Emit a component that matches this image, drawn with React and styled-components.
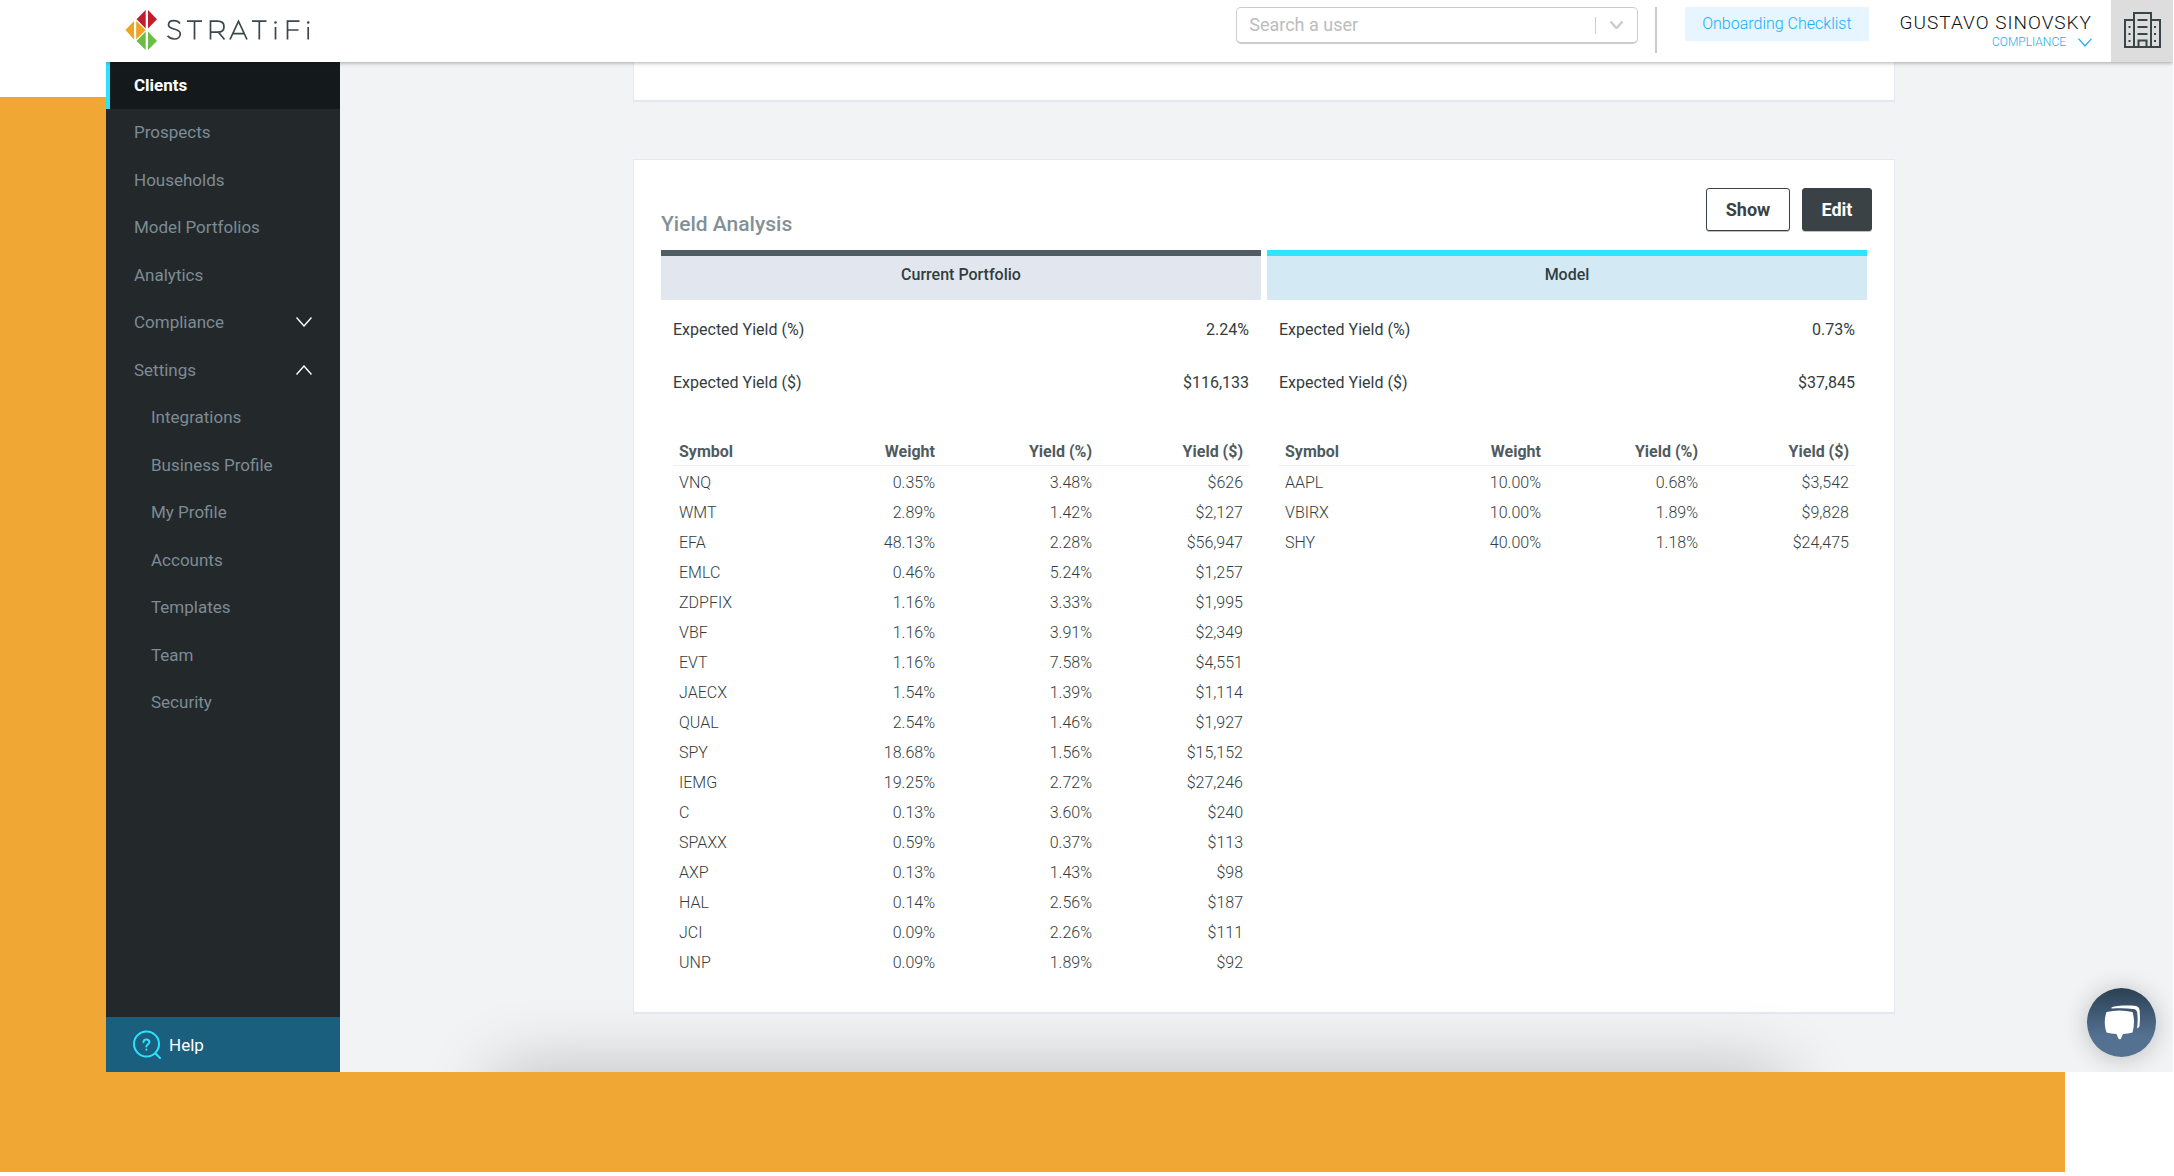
import React, { useState } from "react";
import styled, { createGlobalStyle, css } from "styled-components";

const GlobalStyle = createGlobalStyle`
  *, *::before, *::after { box-sizing: border-box; }
  body {
    margin: 0;
    background: #fff;
    color: #333d40;
    font-family: Roboto, "Liberation Sans", sans-serif;
    font-size: 16px;
    font-weight: 300;
  }
  button, input { font: inherit; }
`;

const Page = styled.div`
  display: flex;
  min-height: 100vh;
  padding-bottom: 4px;
`;

const Stage = styled.div`
  flex: 1;
  display: flex;
  padding: 0 1px 100px 106px;
  background: linear-gradient(#f0a733, #f0a733) no-repeat 0 97px / calc(100% - 109px) calc(100% - 97px);
`;

const Window = styled.div`
  position: relative;
  flex: 1;
  display: flex;
  flex-direction: column;
  overflow: hidden;

  &::after {
    content: "";
    position: absolute;
    top: 100%;
    left: 390px;
    right: 390px;
    height: 100px;
    box-shadow: 0 0 72px rgba(0, 0, 0, 0.24);
    pointer-events: none;
  }
`;

const Header = styled.header`
  z-index: 1;
  display: flex;
  align-items: flex-start;
  height: 62px;
  background: #fff;
  box-shadow: 0 1px 4px rgba(0, 0, 0, 0.32);
`;

const LogoLink = styled.a`
  display: block;
  margin: 9px auto 0 19px;
`;

const SearchBox = styled.div`
  display: flex;
  align-items: center;
  width: 402px;
  height: 37px;
  margin-top: 7px;
  border: 1px solid #ccc;
  border-bottom-width: 2px;
  border-radius: 5px;
`;

const SearchInput = styled.input`
  flex: 1;
  min-width: 0;
  padding: 0 12px;
  border: 0;
  outline: 0;
  background: none;
  font-size: 18px;
  font-weight: 400;
  line-height: 24px;

  &::placeholder { color: #bcbcbc; opacity: 1; }
`;

const DropButton = styled.button`
  display: grid;
  place-items: center;
  width: 42px;
  height: 17px;
  padding: 0;
  border: 0;
  border-left: 1px solid #ccc;
  background: none;
`;

const Divider = styled.span`
  width: 2px;
  height: 46px;
  margin: 7px 28px 0 17px;
  background: #ccc;
`;

const Checklist = styled.a`
  padding: 5px 17px;
  margin-top: 7px;
  background: #e6f5ff;
  color: #1badf5;
  line-height: 24px;
  text-decoration: none;
`;

const Account = styled.button`
  display: flex;
  flex-direction: column;
  align-items: flex-end;
  margin: 11px 19px 0 31px;
  padding: 0;
  border: 0;
  background: none;
`;

const AccountName = styled.span`
  color: #111;
  font-size: 19px;
  line-height: 24px;
  letter-spacing: 1px;
`;

const AccountRole = styled.span`
  display: flex;
  align-items: center;
  gap: 12px;
  color: #1badf5;
  font-size: 12px;
  line-height: 14px;
`;

const OrgButton = styled.button`
  display: grid;
  place-items: center;
  width: 62px;
  height: 62px;
  padding: 0;
  border: 0;
  background: #ddd;
`;

const Body = styled.div`
  flex: 1;
  display: flex;
`;

const Sidebar = styled.aside`
  display: flex;
  flex-direction: column;
  justify-content: space-between;
  width: 234px;
  background: #23292b;
`;

const NavList = styled.ul`
  margin: 0;
  padding: 0;
  list-style: none;
`;

const NavItem = styled.li`
  height: 47px;
  &:nth-child(even) { height: 48px; }
`;

const NavLink = styled.a`
  display: flex;
  align-items: center;
  justify-content: space-between;
  height: 100%;
  padding: 0 28px 2px ${(p) => (p.$nested ? 41 : 24)}px;
  border-left: 4px solid transparent;
  color: #7d8b94;
  font-size: 17px;
  font-weight: 400;
  line-height: 24px;
  text-decoration: none;

  ${(p) =>
    p.$active &&
    css`
      border-left-color: #2ae4ff;
      background: #141a1c;
      color: #fff;
      font-weight: 700;
    `}
`;

const HelpLink = styled.a`
  display: flex;
  align-items: center;
  gap: 8px;
  height: 55px;
  padding-left: 27px;
  background: #1a5f7d;
  color: #fff;
  font-size: 17px;
  font-weight: 400;
  line-height: 24px;
  text-decoration: none;
`;

const Main = styled.main`
  flex: 1;
  display: flex;
  flex-direction: column;
  align-items: center;
  gap: 57px;
  padding: 0 0 58px 15px;
  background: #f1f3f5;
`;

const Card = styled.section`
  width: 100%;
  max-width: 1262px;
  border: 1px solid #e5e8ee;
  border-bottom-width: 2px;
  background: #fff;
`;

const PreviousCard = styled(Card)`
  height: 40px;
  border-top: 0;
`;

const YieldCard = styled(Card)`
  flex: 1;
  padding: 28px 27px 24px;
`;

const CardHeader = styled.div`
  display: flex;
  justify-content: space-between;
  margin-bottom: 12px;
`;

const CardTitle = styled.h2`
  align-self: flex-end;
  margin: 0;
  color: #848f96;
  font-size: 21px;
  font-weight: 500;
  line-height: 28px;
`;

const Actions = styled.div`
  display: flex;
  gap: 12px;
  margin: 0 -5px 7px 0;
`;

const ActionButton = styled.button`
  width: ${(p) => (p.$filled ? 70 : 84)}px;
  height: 43px;
  padding: 0;
  border: 1px solid #3a4245;
  border-radius: 3px;
  background: ${(p) => (p.$filled ? "#3a4245" : "#fff")};
  color: ${(p) => (p.$filled ? "#fff" : "#3a4245")};
  font-size: 18px;
  font-weight: 700;
  box-shadow: 0 1px 0 rgba(0, 0, 0, 0.25);
`;

const Columns = styled.div`
  display: grid;
  grid-template-columns: 1fr 1fr;
  gap: 6px;
`;

const ColumnTitle = styled.h3`
  height: 50px;
  margin: 0;
  padding-top: 7px;
  border-top: 6px solid ${(p) => p.$accent};
  background: ${(p) => p.$tint};
  font-size: 16px;
  font-weight: 500;
  line-height: 24px;
  text-align: center;
`;

const Summary = styled.dl`
  margin: 3px 0 28px;
  padding: 0 12px;
`;

const SummaryRow = styled.div`
  display: flex;
  justify-content: space-between;
  font-weight: 400;
  line-height: 53px;
`;

const SummaryValue = styled.dd`
  margin: 0;
`;

const Holdings = styled.table`
  width: calc(100% - 24px);
  margin: 0 12px;
  border-collapse: collapse;
  table-layout: fixed;
`;

const Column = styled.col`
  width: ${(p) => (p.$width ? `${p.$width}px` : "auto")};
`;

const HeadCell = styled.th`
  height: 28px;
  padding: 2px 6px 0;
  border-bottom: 1px solid #eceef1;
  color: #4f5b60;
  font-weight: 700;
  text-align: ${(p) => (p.$start ? "left" : "right")};
`;

const Cell = styled.td`
  height: 30px;
  padding: 5px 6px 1px;
  line-height: 24px;
  text-align: ${(p) => (p.$start ? "left" : "right")};
`;

const ChatButton = styled.button`
  position: absolute;
  right: 17px;
  bottom: 15px;
  z-index: 2;
  display: grid;
  place-items: center;
  width: 69px;
  height: 69px;
  padding: 0;
  border: 0;
  border-radius: 50%;
  background: linear-gradient(#2b4053, #547192 70%);
  box-shadow: 0 2px 24px rgba(0, 0, 0, 0.22);
`;

function Logo() {
  return (
    <svg width="190" height="42" viewBox="0 0 190 42" role="img" aria-label="StratiFi">
      <g fill="#bf1e2e"><path d="M20.700 1v18.500L11.500 10.200z" /><path d="M23 1v18.500L32 10.200z" /></g>
      <g fill="#f0a31f"><path d="M9 12v18.500L0.500 21z" /><path d="M11.200 12v18.500L20.500 21z" /></g>
      <g fill="#6cbd45"><path d="M20.700 22.500V41L11.500 32z" /><path d="M23 22.500V41L32 32z" /></g>
      <g fill="none" stroke="#3a474b" strokeWidth="1.700">
        <path d="M55 14.500C53.500 12.500 51.500 11.700 48.900 11.700C45.500 11.700 43.500 13.500 43.500 16C43.500 21.500 55.300 18.500 55.300 25C55.300 28 52.700 30 49.500 30C46.500 30 44.300 29 42.500 26.800" />
        <path d="M62 12.200h15M69.500 12.200V30.500" />
        <path d="M85.500 30.500V12.200h7c4.500 0 6.500 2.300 6.500 5.500s-2 5.500-6.500 5.500h-7M93.500 23.200l6 7.300" />
        <path d="M105 30.500l8.500-18.300L122 30.500M108 24.700h11" />
        <path d="M127 12.200h14.500M134.300 12.200V30.500" />
        <path d="M150.500 18v12.500M162.500 30.500V12.200h12M162.500 21h11M183.200 18v12.500" />
      </g>
      <g fill="#3a474b"><circle cx="150.500" cy="13.500" r="1.300" /><circle cx="183.200" cy="13.500" r="1.300" /></g>
    </svg>
  );
}

function Chevron({ up, width = 16, height = 10, stroke = "#fff", weight = 1.4 }) {
  return (
    <svg width={width} height={height} viewBox="0 0 16 10" fill="none" stroke={stroke} strokeWidth={weight} aria-hidden="true">
      <path d={up ? "M0.500 9.500L8 1l7.500 8.500" : "M0.500 0.500L8 9l7.500-8.500"} />
    </svg>
  );
}

function BuildingIcon() {
  return (
    <svg width="38" height="38" viewBox="0 0 38 38" fill="none" stroke="#3a4547" strokeWidth="2" aria-hidden="true">
      <path d="M11 35V1h17v34M11 8H2v27h35V8h-9M15.500 35v-6.500h8V35" />
      <path d="M14.500 8h10M14.500 15h10M14.500 22h10" />
      <path d="M5.500 15h2M5.500 22h2M5.500 29h2M31 15h2M31 22h2M31 29h2" />
    </svg>
  );
}

function HelpIcon() {
  return (
    <svg width="28" height="29" viewBox="0 0 28 29" fill="none" stroke="#2ae4ff" strokeWidth="2" strokeLinecap="round" aria-hidden="true">
      <circle cx="13.500" cy="14" r="12.500" />
      <path d="M22.500 23.500l4.500 4.500" />
      <path d="M10.500 12.300c0-1.800 1.300-2.800 2.900-2.800s3 1 3 2.700c0 2-3 2.200-3 4.300" />
      <path d="M13.400 19.500v0.200" />
    </svg>
  );
}

function ChatIcon() {
  return (
    <svg width="36" height="35" viewBox="0 0 36 35" fill="#fff" aria-hidden="true">
      <path d="M2.500 7C11 5 20 5 28.500 7c2 6 2 13.500 0 20.500-3 .9-6 1.300-9.500 1.500L17 33.500q-1.300 1.700-2.600 0L12.500 29C9 28.800 5.500 28.300 2.500 27.500 .2 20.500 .2 13.500 2.500 7z" />
      <path d="M7.500 2.500C12 .3 25 .3 32 1c2.500.5 3.500 2.500 3.700 5 .3 5 .3 10-.2 15-.3 1.300-1.300 2-2.500 2.500.8-5.500.9-11 .2-16-.5-2.300-1.700-3.200-4-3.500-7-1-14-1-20.500-.5-1.300 0-1.700-.4-1.200-1z" />
    </svg>
  );
}

const NAV = [
  { label: "Clients", active: true },
  { label: "Prospects" },
  { label: "Households" },
  { label: "Model Portfolios" },
  { label: "Analytics" },
  { label: "Compliance", arrow: "down" },
  { label: "Settings", arrow: "up" },
  { label: "Integrations", nested: true },
  { label: "Business Profile", nested: true },
  { label: "My Profile", nested: true },
  { label: "Accounts", nested: true },
  { label: "Templates", nested: true },
  { label: "Team", nested: true },
  { label: "Security", nested: true },
];

const PORTFOLIOS = [
  {
    title: "Current Portfolio",
    accent: "#505e64",
    tint: "#e2e7ef",
    percent: "2.24%",
    dollars: "$116,133",
    rows: [
      ["VNQ", "0.35%", "3.48%", "$626"],
      ["WMT", "2.89%", "1.42%", "$2,127"],
      ["EFA", "48.13%", "2.28%", "$56,947"],
      ["EMLC", "0.46%", "5.24%", "$1,257"],
      ["ZDPFIX", "1.16%", "3.33%", "$1,995"],
      ["VBF", "1.16%", "3.91%", "$2,349"],
      ["EVT", "1.16%", "7.58%", "$4,551"],
      ["JAECX", "1.54%", "1.39%", "$1,114"],
      ["QUAL", "2.54%", "1.46%", "$1,927"],
      ["SPY", "18.68%", "1.56%", "$15,152"],
      ["IEMG", "19.25%", "2.72%", "$27,246"],
      ["C", "0.13%", "3.60%", "$240"],
      ["SPAXX", "0.59%", "0.37%", "$113"],
      ["AXP", "0.13%", "1.43%", "$98"],
      ["HAL", "0.14%", "2.56%", "$187"],
      ["JCI", "0.09%", "2.26%", "$111"],
      ["UNP", "0.09%", "1.89%", "$92"],
    ],
  },
  {
    title: "Model",
    accent: "#2ee5ff",
    tint: "#d3e9f4",
    percent: "0.73%",
    dollars: "$37,845",
    rows: [
      ["AAPL", "10.00%", "0.68%", "$3,542"],
      ["VBIRX", "10.00%", "1.89%", "$9,828"],
      ["SHY", "40.00%", "1.18%", "$24,475"],
    ],
  },
];

function Portfolio({ title, accent, tint, percent, dollars, rows }) {
  return (
    <div>
      <ColumnTitle $accent={accent} $tint={tint}>{title}</ColumnTitle>
      <Summary>
        <SummaryRow><dt>Expected Yield (%)</dt><SummaryValue>{percent}</SummaryValue></SummaryRow>
        <SummaryRow><dt>Expected Yield ($)</dt><SummaryValue>{dollars}</SummaryValue></SummaryRow>
      </Summary>
      <Holdings aria-label={`${title} holdings`}>
        <colgroup>
          <Column />
          <Column $width={120} />
          <Column $width={157} />
          <Column $width={151} />
        </colgroup>
        <thead>
          <tr>
            <HeadCell $start>Symbol</HeadCell>
            <HeadCell>Weight</HeadCell>
            <HeadCell>Yield (%)</HeadCell>
            <HeadCell>Yield ($)</HeadCell>
          </tr>
        </thead>
        <tbody>
          {rows.map((row) => (
            <tr key={row[0]}>
              {row.map((value, i) => <Cell key={i} $start={i === 0}>{value}</Cell>)}
            </tr>
          ))}
        </tbody>
      </Holdings>
    </div>
  );
}

export default function App() {
  const [query, setQuery] = useState("");

  return (
    <>
      <GlobalStyle />
      <Page>
        <Stage>
          <Window>
            <Header>
              <LogoLink href="#home"><Logo /></LogoLink>
              <SearchBox>
                <SearchInput
                  type="text"
                  aria-label="Search a user"
                  placeholder="Search a user"
                  value={query}
                  onChange={(e) => setQuery(e.target.value)}
                />
                <DropButton type="button" aria-label="Show users">
                  <Chevron width={13} height={8} stroke="#ccc" weight={3} />
                </DropButton>
              </SearchBox>
              <Divider />
              <Checklist href="#checklist">Onboarding Checklist</Checklist>
              <Account type="button">
                <AccountName>GUSTAVO SINOVSKY</AccountName>
                <AccountRole>COMPLIANCE <Chevron width={14} height={9} stroke="#1badf5" /></AccountRole>
              </Account>
              <OrgButton type="button" aria-label="Organization"><BuildingIcon /></OrgButton>
            </Header>
            <Body>
              <Sidebar>
                <nav aria-label="Main">
                  <NavList>
                    {NAV.map((item) => (
                      <NavItem key={item.label}>
                        <NavLink href="#nav" $active={item.active} $nested={item.nested}>
                          {item.label}
                          {item.arrow && <Chevron up={item.arrow === "up"} />}
                        </NavLink>
                      </NavItem>
                    ))}
                  </NavList>
                </nav>
                <HelpLink href="#help"><HelpIcon />Help</HelpLink>
              </Sidebar>
              <Main>
                <PreviousCard />
                <YieldCard>
                  <CardHeader>
                    <CardTitle>Yield Analysis</CardTitle>
                    <Actions>
                      <ActionButton type="button">Show</ActionButton>
                      <ActionButton type="button" $filled>Edit</ActionButton>
                    </Actions>
                  </CardHeader>
                  <Columns>
                    {PORTFOLIOS.map((p) => <Portfolio key={p.title} {...p} />)}
                  </Columns>
                </YieldCard>
              </Main>
            </Body>
            <ChatButton type="button" aria-label="Open chat"><ChatIcon /></ChatButton>
          </Window>
        </Stage>
      </Page>
    </>
  );
}
